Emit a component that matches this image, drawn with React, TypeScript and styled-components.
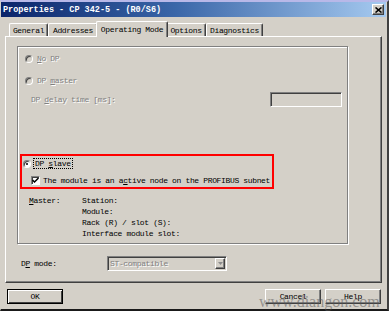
import React from "react";
import styled, { createGlobalStyle } from "styled-components";

const GlobalStyle = createGlobalStyle`
  html, body {
    margin: 0;
    padding: 0;
    background: #ffffff;
  }
  body {
    font-family: "Liberation Mono", "DejaVu Sans Mono", monospace;
    font-size: 8px;
    letter-spacing: -0.35px;
    color: #000;
  }
  * {
    box-sizing: border-box;
  }
`;

const face = "#d4d0c8";
const shadow = "#808080";
const darkShadow = "#404040";
const light = "#ffffff";

const tabs = [
  { label: "General", width: 39 },
  { label: "Addresses", width: 50 },
  { label: "Operating Mode", width: 68, active: true },
  { label: "Options", width: 40 },
  { label: "Diagnostics", width: 57 },
];

function App() {
  return (
    <>
      <GlobalStyle />
      <Window>
        <TitleBar>
          <Title>Properties - CP 342-5 - (R0/S6)</Title>
          <CloseButton aria-label="close">
            <svg width="7" height="6" viewBox="0 0 7 6">
              <path d="M0.5 0.5 L6.5 5.5 M6.5 0.5 L0.5 5.5" stroke="#000" strokeWidth="1.6" />
            </svg>
          </CloseButton>
        </TitleBar>
        <Body>
          <TabStrip>
            {tabs.map((t) => (
              <Tab key={t.label} $width={t.width} $active={t.active}>
                {t.label}
              </Tab>
            ))}
          </TabStrip>
          <TabPanel>
            <GroupBox>
              <OptionRow $disabled>
                <Radio $disabled />
                <span>
                  <u>N</u>o DP
                </span>
              </OptionRow>
              <OptionRow $disabled $gap={11}>
                <Radio $disabled />
                <span>
                  DP <u>m</u>aster
                </span>
              </OptionRow>
              <DelayRow>
                <span>
                  DP <u>d</u>elay time [ms]:
                </span>
                <SunkenBox $width={72} />
              </DelayRow>
              <Highlight>
                <SlaveRow>
                  <Radio $checked />
                  <FocusLabel>
                    DP <u>s</u>lave
                  </FocusLabel>
                </SlaveRow>
                <CheckRow>
                  <CheckBox>
                    <svg width="7" height="7" viewBox="0 0 7 7">
                      <path d="M0.5 3 L2.5 5 L6.5 1" stroke="#000" strokeWidth="1.5" fill="none" />
                    </svg>
                  </CheckBox>
                  <span>
                    The module is an a<u>c</u>tive node on the PROFIBUS subnet
                  </span>
                </CheckRow>
              </Highlight>
              <MasterGrid>
                <span>
                  <u>M</u>aster:
                </span>
                <span>Station:</span>
                <span />
                <span>Module:</span>
                <span />
                <span>Rack (R) / slot (S):</span>
                <span />
                <span>Interface module slot:</span>
              </MasterGrid>
            </GroupBox>
            <ModeRow>
              <span>
                D<u>P</u> mode:
              </span>
              <Combo>
                <ComboText>ST-compatible</ComboText>
                <ComboArrow>
                  <svg width="5" height="3" viewBox="0 0 5 3">
                    <path d="M0 0 H5 L2.5 3 Z" fill="#8c8c8c" />
                  </svg>
                </ComboArrow>
              </Combo>
            </ModeRow>
          </TabPanel>
          <ButtonRow>
            <PushButton $default>OK</PushButton>
            <RightButtons>
              <PushButton>Cancel</PushButton>
              <PushButton>Help</PushButton>
            </RightButtons>
          </ButtonRow>
          <Watermark>www.diangon.com</Watermark>
        </Body>
      </Window>
    </>
  );
}
export default App;

const Window = styled.div`
  position: relative;
  width: 389px;
  height: 311px;
  background: ${face};
  border-top: 2px solid #b8b8e8;
  border-left: 1px solid ${face};
  border-right: 2px solid ${darkShadow};
  border-bottom: 2px solid #1a1a1a;
  display: flex;
  flex-direction: column;
`;

const TitleBar = styled.div`
  height: 15px;
  display: flex;
  align-items: center;
  justify-content: space-between;
  padding: 0 2px 0 2px;
  margin-right: 1px;
  background: linear-gradient(to right, #0a246a 0%, #3a66a8 45%, #a6caf0 100%);
`;

const Title = styled.span`
  color: #fff;
  font-weight: bold;
  font-size: 8.5px;
  letter-spacing: 0;
  white-space: nowrap;
`;

const CloseButton = styled.div`
  width: 12px;
  height: 11px;
  display: flex;
  align-items: center;
  justify-content: center;
  background: ${face};
  border: 1px solid;
  border-color: ${light} ${darkShadow} ${darkShadow} ${light};
  box-shadow: inset -1px -1px ${shadow};
`;

const Body = styled.div`
  flex: 1;
  display: flex;
  flex-direction: column;
  padding: 0 5px 0 4px;
`;

const TabStrip = styled.div`
  display: flex;
  align-items: flex-end;
  height: 15px;
  margin-top: 4px;
  padding-left: 4px;
`;

const Tab = styled.div<{ $width: number; $active?: boolean }>`
  position: relative;
  width: ${({ $width, $active }) => ($active ? $width + 4 : $width)}px;
  height: ${({ $active }) => ($active ? 16 : 13)}px;
  margin: ${({ $active }) => ($active ? "0 -2px -1px -2px" : "0")};
  z-index: ${({ $active }) => ($active ? 1 : 0)};
  display: flex;
  align-items: ${({ $active }) => ($active ? "flex-start" : "center")};
  padding-top: ${({ $active }) => ($active ? "3px" : "0")};
  justify-content: center;
  white-space: nowrap;
  background: ${face};
  border-top: 1px solid ${light};
  border-left: 1px solid ${light};
  border-right: 1px solid ${darkShadow};
  box-shadow: inset -1px 0 ${shadow};
  border-radius: 2px 2px 0 0;
`;

const TabPanel = styled.div`
  height: 247px;
  padding: 9px 0 0 11px;
  border: 1px solid;
  border-color: ${light} ${darkShadow} ${darkShadow} ${light};
  box-shadow: inset -1px -1px ${shadow};
`;

const GroupBox = styled.div`
  width: 331px;
  height: 198px;
  padding: 6px 5px 0 2px;
  border: 1px solid ${shadow};
  box-shadow: inset 1px 1px ${light}, 1px 1px ${light};
`;

const OptionRow = styled.div<{ $disabled?: boolean; $gap?: number }>`
  display: flex;
  align-items: center;
  gap: 4px;
  height: 11px;
  margin: ${({ $gap }) => $gap ?? 0}px 0 0 5px;
  color: ${({ $disabled }) => ($disabled ? shadow : "#000")};
  text-shadow: ${({ $disabled }) => ($disabled ? `1px 1px ${light}` : "none")};
`;

const Radio = styled.span<{ $checked?: boolean; $disabled?: boolean }>`
  position: relative;
  flex: none;
  width: 8px;
  height: 8px;
  border-radius: 50%;
  background: ${({ $disabled }) => ($disabled ? face : light)};
  border: 1px solid;
  border-color: ${shadow} ${light} ${light} ${shadow};
  box-shadow: inset 1px 1px ${darkShadow};
  &::after {
    content: "";
    display: ${({ $checked }) => ($checked ? "block" : "none")};
    position: absolute;
    left: 2px;
    top: 2px;
    width: 2px;
    height: 2px;
    border-radius: 50%;
    background: #000;
  }
`;

const DelayRow = styled.div`
  display: flex;
  align-items: center;
  justify-content: space-between;
  height: 15px;
  margin: 6px 0 0 11px;
  color: ${shadow};
  text-shadow: 1px 1px ${light};
`;

const SunkenBox = styled.div<{ $width: number }>`
  width: ${({ $width }) => $width}px;
  height: 15px;
  background: ${face};
  border: 1px solid;
  border-color: ${shadow} ${light} ${light} ${shadow};
  box-shadow: inset 1px 1px ${darkShadow};
`;

const Highlight = styled.div`
  width: 254px;
  height: 35px;
  margin-top: 47px;
  padding: 2px 0 0 1px;
  border: 2px solid #ff0000;
`;

const SlaveRow = styled.div`
  display: flex;
  align-items: center;
  gap: 3px;
  height: 11px;
`;

const FocusLabel = styled.span`
  outline: 1px dotted #000;
  padding: 0 1px;
  line-height: 9px;
`;

const CheckRow = styled.div`
  display: flex;
  align-items: center;
  gap: 3px;
  height: 9px;
  margin: 7px 0 0 8px;
  white-space: nowrap;
`;

const CheckBox = styled.span`
  flex: none;
  width: 9px;
  height: 9px;
  display: flex;
  align-items: center;
  justify-content: center;
  background: ${light};
  border: 1px solid;
  border-color: ${shadow} ${light} ${light} ${shadow};
  box-shadow: inset 1px 1px ${darkShadow};
`;

const MasterGrid = styled.div`
  display: grid;
  grid-template-columns: 53px auto;
  grid-auto-rows: 11px;
  align-items: center;
  margin: 6px 0 0 9px;
  white-space: nowrap;
`;

const ModeRow = styled.div`
  display: grid;
  grid-template-columns: 86px 120px;
  align-items: center;
  margin: 12px 0 0 4px;
`;

const Combo = styled.div`
  height: 15px;
  display: flex;
  align-items: center;
  justify-content: space-between;
  padding: 0 1px 0 2px;
  background: ${face};
  border: 1px solid;
  border-color: ${shadow} ${light} ${light} ${shadow};
  box-shadow: inset 1px 1px ${darkShadow};
`;

const ComboText = styled.span`
  color: ${shadow};
  text-shadow: 1px 1px ${light};
`;

const ComboArrow = styled.span`
  width: 10px;
  height: 11px;
  display: flex;
  align-items: center;
  justify-content: center;
  background: ${face};
  border: 1px solid;
  border-color: ${light} ${darkShadow} ${darkShadow} ${light};
  box-shadow: inset -1px -1px ${shadow};
`;

const ButtonRow = styled.div`
  display: flex;
  justify-content: space-between;
  margin: 6px 1px 0 2px;
`;

const RightButtons = styled.div`
  display: flex;
  gap: 4px;
`;

const PushButton = styled.div<{ $default?: boolean }>`
  width: 56px;
  height: 15px;
  display: flex;
  align-items: center;
  justify-content: center;
  background: ${face};
  border: 1px solid;
  border-color: ${({ $default }) =>
    $default ? "#000" : `${light} ${darkShadow} ${darkShadow} ${light}`};
  box-shadow: ${({ $default }) =>
    $default
      ? `inset 1px 1px ${light}, inset -1px -1px ${darkShadow}`
      : `inset -1px -1px ${shadow}`};
`;

const Watermark = styled.div`
  position: absolute;
  left: 258px;
  top: 291px;
  font-family: "Liberation Serif", serif;
  font-size: 16px;
  letter-spacing: 0;
  color: rgba(90, 90, 90, 0.55);
  white-space: nowrap;
  pointer-events: none;
`;
